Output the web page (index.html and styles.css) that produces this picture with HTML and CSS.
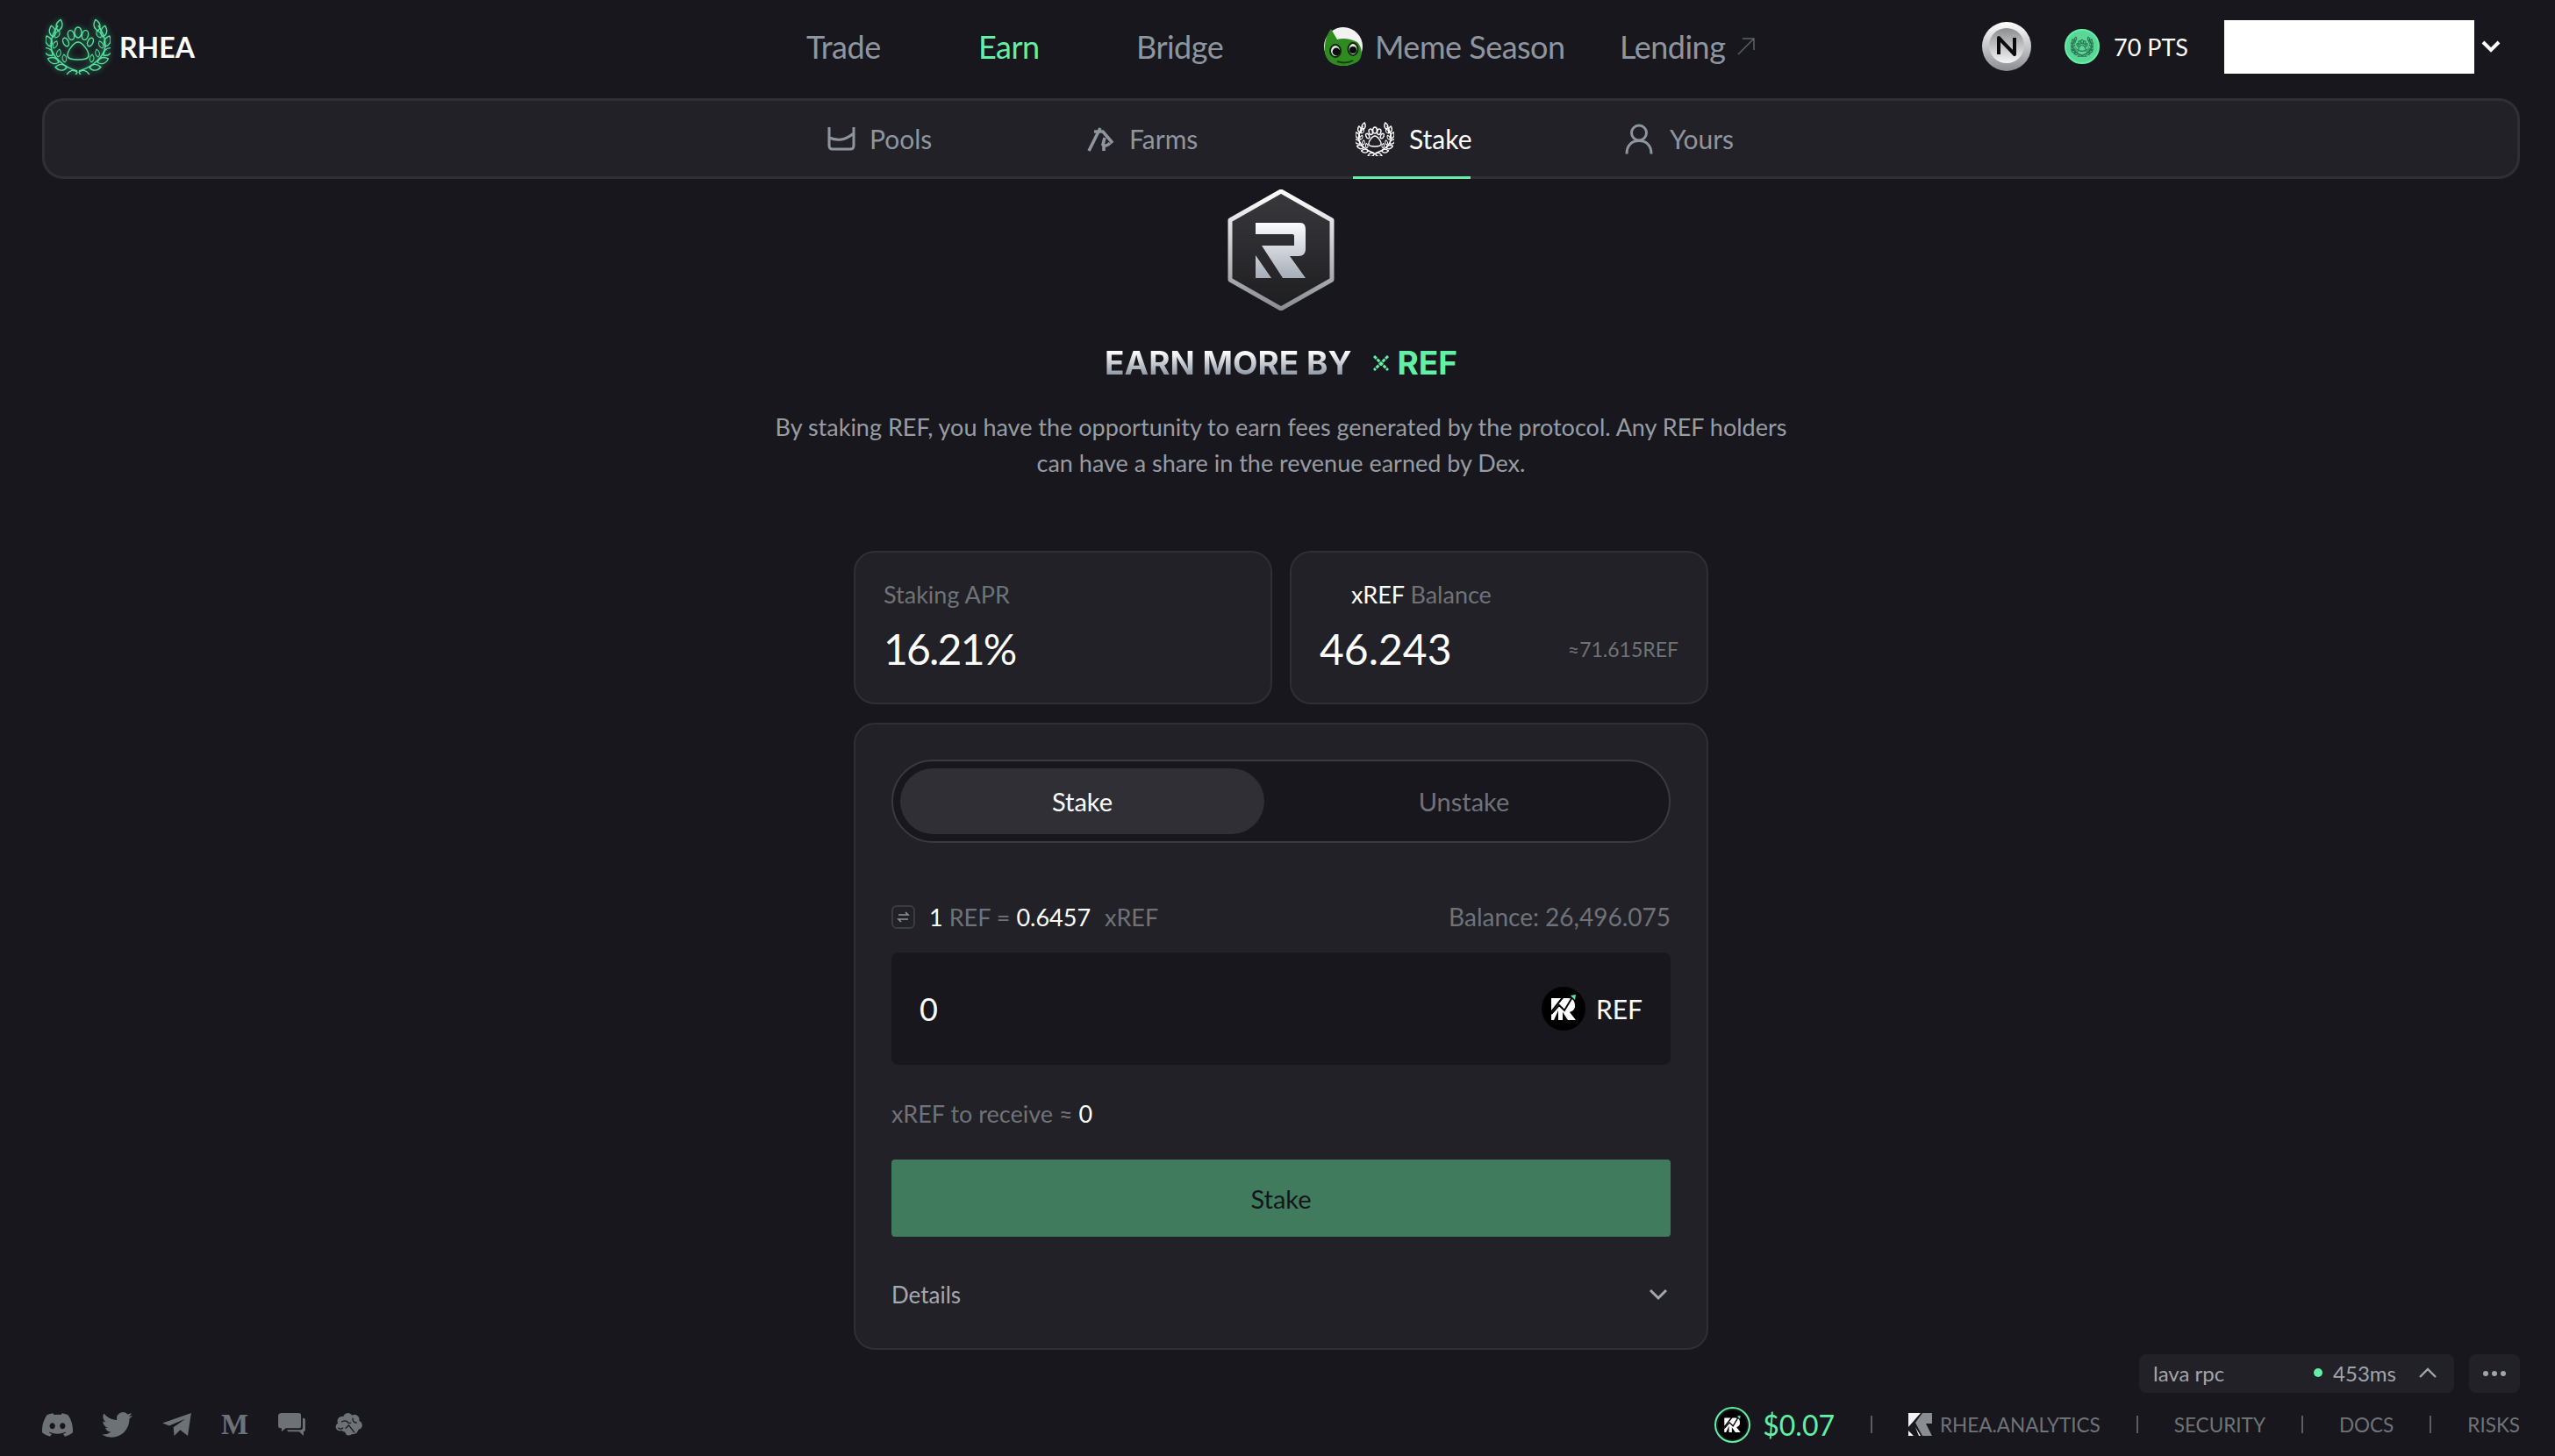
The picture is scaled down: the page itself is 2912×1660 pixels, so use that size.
FILE: index.html
```html
<!doctype html>
<html lang="en">
  <head>
    <meta charset="UTF-8" />
    <title>RHEA - Stake</title>
    <link rel="stylesheet" href="styles.css">
  </head>
  <body>
    <svg class="defs" width="0" height="0">
      <defs>
        <path id="leaf" d="M0 0C4 -3 5 -8 0 -13C-5 -8 -4 -3 0 0Z" />
        <g id="branch">
          <path d="M36 60C22 56 6 44 6 30C6 22 10 14 14 8" />
          <use href="#leaf" transform="translate(14 14) rotate(14)" />
          <use href="#leaf" transform="translate(9 21) rotate(-12)" />
          <use href="#leaf" transform="translate(11 22) rotate(32) scale(.7)" />
          <use href="#leaf" transform="translate(6 32) rotate(-22)" />
          <use href="#leaf" transform="translate(9 34) rotate(25) scale(.7)" />
          <use href="#leaf" transform="translate(8 42) rotate(-50)" />
          <use href="#leaf" transform="translate(14 44) rotate(12) scale(.7)" />
          <use href="#leaf" transform="translate(15 50) rotate(-72)" />
          <use href="#leaf" transform="translate(22 50) rotate(-8) scale(.7)" />
          <use href="#leaf" transform="translate(24 56) rotate(-88)" />
          <use href="#leaf" transform="translate(36 61) rotate(-108)" />
        </g>
        <symbol id="wreath" viewBox="0 0 74 64">
          <g fill="none" stroke="currentColor" stroke-linejoin="round">
            <use href="#branch" />
            <use href="#branch" transform="matrix(-1 0 0 1 74 0)" />
            <ellipse cx="37" cy="16" rx="4" ry="6" />
            <ellipse cx="29" cy="19" rx="3.5" ry="5.5" transform="rotate(-14 29 19)" />
            <ellipse cx="45" cy="19" rx="3.5" ry="5.5" transform="rotate(14 45 19)" />
            <ellipse cx="23" cy="27" rx="3" ry="5" transform="rotate(-25 23 27)" />
            <ellipse cx="51" cy="27" rx="3" ry="5" transform="rotate(25 51 27)" />
            <path d="M37 27C42 27 49 37 49 42C49 47 42 47 37 47C32 47 25 47 25 42C25 37 32 27 37 27Z" />
          </g>
        </symbol>
        <linearGradient id="silver" x1="0" y1="0" x2="0" y2="1">
          <stop offset="0" stop-color="#ffffff" />
          <stop offset="1" stop-color="#8b8d92" />
        </linearGradient>
        <linearGradient id="coin" x1="0" y1="0" x2="0" y2="1">
          <stop offset="0" stop-color="#8d8e90" />
          <stop offset="1" stop-color="#f5f5f6" />
        </linearGradient>
        <linearGradient id="hexfill" x1="0" y1="0" x2="0" y2="1">
          <stop offset="0" stop-color="#39393d" />
          <stop offset="1" stop-color="#1e1e21" />
        </linearGradient>
        <linearGradient id="rfill" x1="0" y1="0" x2="0" y2="1">
          <stop offset="0" stop-color="#fbfcfd" />
          <stop offset="1" stop-color="#a5adb8" />
        </linearGradient>
        <symbol id="ref-mark" viewBox="0 0 50 50">
          <circle cx="25" cy="25" r="25" fill="#000" />
          <path d="M11 13H22L11 27ZM11 30L25 13H30C37 13 38 18 38 22C38 26 35 28 32 29L39 38H30L24 29V38H19V27L14 38H11Z" fill="#fff" />
          <path d="M11 31L20 21L26 27L35 12" fill="none" stroke="#000" stroke-width="2" />
          <path d="M33 10L39 9L38 15Z" fill="#5ee0b0" />
        </symbol>
      </defs>
    </svg>

    <header class="topbar">
      <a class="brand">
        <svg class="brand-logo"><use href="#wreath" /></svg>
        <span>RHEA</span>
      </a>
      <nav class="main-nav">
        <a class="nav-trade">Trade</a>
        <a class="nav-earn">Earn</a>
        <a class="nav-bridge">Bridge</a>
        <a class="nav-meme">
          <svg class="frog" viewBox="0 0 44 44">
            <circle cx="22" cy="22" r="22" fill="#f2f2f2" />
            <path d="M1 28C0 18 3 8 8 2L15 14C22 12 30 13 38 17C44 23 44 33 40 38C30 46 12 46 5 38C3 35 1 32 1 28Z" fill="#2f8a1f" />
            <ellipse cx="13" cy="27" rx="6" ry="7" fill="#e8eee6" stroke="#0e2a09" stroke-width="2" />
            <ellipse cx="33" cy="25" rx="5.5" ry="7" fill="#e8eee6" stroke="#0e2a09" stroke-width="2" />
            <circle cx="14" cy="28" r="4.4" fill="#0c0c0c" />
            <circle cx="33" cy="26" r="4" fill="#0c0c0c" />
            <path d="M15 39C20 41 28 41 33 38" fill="none" stroke="#123d0c" stroke-width="2" />
          </svg>
          Meme Season
        </a>
        <a class="nav-lending">
          Lending
          <svg class="arrow-out" viewBox="0 0 20 20" fill="none" stroke="currentColor" stroke-width="1.5"><path d="M1 19L19 1M6 1H19V14" /></svg>
        </a>
      </nav>
      <div class="account">
        <svg class="near" viewBox="0 0 56 56">
          <ellipse cx="28" cy="28" rx="28" ry="28" fill="url(#silver)" />
          <circle cx="28" cy="27" r="20" fill="url(#coin)" />
          <path d="M19 37V18L37 37V18" fill="none" stroke="#0b0b0d" stroke-width="4" stroke-linejoin="round" />
        </svg>
        <span class="points">
          <span class="points-coin"><svg class="points-wreath"><use href="#wreath" /></svg></span>
          70 PTS
        </span>
        <div class="wallet"></div>
        <svg class="wallet-arrow" viewBox="0 0 22 14" fill="none" stroke="#fff" stroke-width="4"><path d="M2 2L11 11L20 2" /></svg>
      </div>
    </header>

    <nav class="sub-nav">
      <a class="sub-item sub-pools">
        <svg class="sub-icon" viewBox="0 0 32 28" fill="none" stroke="currentColor" stroke-width="3"><path d="M2 1V22C2 25 4 26 6 26H26C28 26 30 25 30 22V1M2 13C12 17 20 16 30 8" /></svg>
        Pools
      </a>
      <a class="sub-item sub-farms">
        <svg class="sub-icon" viewBox="0 0 32 30" fill="none" stroke="currentColor" stroke-width="3.6"><path d="M2 29L15 3M8 7H18L29 20M20 14L18 22C20 24 24 23 26 20M19 22V29" /></svg>
        Farms
      </a>
      <a class="sub-item sub-stake active">
        <svg class="stake-icon"><use href="#wreath" /></svg>
        Stake
      </a>
      <a class="sub-item sub-yours">
        <svg class="sub-icon icon-tall" viewBox="0 0 32 34" fill="none" stroke="currentColor" stroke-width="3"><circle cx="16" cy="10" r="8.5" /><path d="M2 34C2 24 8 19 16 19C24 19 30 24 30 34" /></svg>
        Yours
      </a>
    </nav>

    <main class="stake-page">
      <svg class="hex-logo" viewBox="0 0 124 138">
        <path d="M62 2L120 35V103L62 136L4 103V35Z" fill="url(#hexfill)" stroke="url(#silver)" stroke-width="5" stroke-linejoin="round" />
        <path d="M33 38H84C89 38 90 42 90 46V68C90 73 87 76 82 76H72L90 101H64L40 64H77V54C77 51 76 51 74 51H33ZM33 75L51 101H33Z" fill="url(#rfill)" />
      </svg>
      <h1 class="headline">
        <span class="headline-text">EARN MORE BY</span>
        <svg class="headline-x" viewBox="0 0 18 18" fill="none" stroke="#62f0a6" stroke-width="3" stroke-dasharray="4 1"><path d="M1 1L17 17M17 1L1 17" /></svg>
        <span class="headline-ref">REF</span>
      </h1>
      <p class="intro">By staking REF, you have the opportunity to earn fees generated by the protocol. Any REF holders<br />can have a share in the revenue earned by Dex.</p>

      <section class="stats">
        <div class="stat-card">
          <div class="stat-label">Staking APR</div>
          <div class="stat-row"><span class="stat-value stat-apr">16.21%</span></div>
        </div>
        <div class="stat-card">
          <div class="stat-label stat-label-indent"><span class="white">xREF</span> Balance</div>
          <div class="stat-row">
            <span class="stat-value">46.243</span>
            <span class="stat-note">≈71.615REF</span>
          </div>
        </div>
      </section>

      <section class="stake-card">
        <div class="tabs">
          <button class="tab tab-on">Stake</button>
          <button class="tab tab-off">Unstake</button>
        </div>
        <div class="rate-row">
          <span class="rate">
            <svg class="swap-btn" viewBox="0 0 27 27" fill="none">
              <rect x="1" y="1" width="25" height="25" rx="5" stroke="#3a3c43" stroke-width="2" />
              <path d="M8 11H19L16 8M19 16H8L11 19" stroke="#8e939b" stroke-width="1.6" />
            </svg>
            <span class="white">1</span> REF = <span class="white">0.6457</span><span class="rate-unit">xREF</span>
          </span>
          <span>Balance: 26,496.075</span>
        </div>
        <div class="amount-box">
          <span class="amount">0</span>
          <span class="token">
            <svg class="token-icon"><use href="#ref-mark" /></svg>
            REF
          </span>
        </div>
        <div class="receive">xREF to receive ≈ <span class="white">0</span></div>
        <button class="stake-btn">Stake</button>
        <div class="details">
          <span>Details</span>
          <svg class="details-arrow" viewBox="0 0 22 14" fill="none" stroke="#a4a8ae" stroke-width="3"><path d="M2 2L11 11L20 2" /></svg>
        </div>
      </section>
    </main>

    <footer class="footer">
      <div class="rpc-row">
        <div class="rpc-box">
          <span>lava rpc</span>
          <span class="rpc-status">
            <i class="rpc-dot"></i>453ms
            <svg class="rpc-arrow" viewBox="0 0 20 12" fill="none" stroke="currentColor" stroke-width="2.4"><path d="M1 11L10 2L19 11" /></svg>
          </span>
        </div>
        <div class="rpc-more"><i></i><i></i><i></i></div>
      </div>
      <div class="footer-row">
        <div class="socials">
          <svg class="social social-big" viewBox="0 0 24 24"><path d="M20.317 4.37a19.791 19.791 0 0 0-4.885-1.515.074.074 0 0 0-.079.037c-.21.375-.444.864-.608 1.25a18.27 18.27 0 0 0-5.487 0 12.64 12.64 0 0 0-.617-1.25.077.077 0 0 0-.079-.037A19.736 19.736 0 0 0 3.677 4.37a.07.07 0 0 0-.032.027C.533 9.046-.32 13.58.099 18.057a.082.082 0 0 0 .031.057 19.9 19.9 0 0 0 5.993 3.03.078.078 0 0 0 .084-.028 14.09 14.09 0 0 0 1.226-1.994.076.076 0 0 0-.041-.106 13.107 13.107 0 0 1-1.872-.892.077.077 0 0 1-.008-.128 10.2 10.2 0 0 0 .372-.292.074.074 0 0 1 .077-.01c3.928 1.793 8.18 1.793 12.062 0a.074.074 0 0 1 .078.01c.12.098.246.198.373.292a.077.077 0 0 1-.006.127 12.299 12.299 0 0 1-1.873.892.077.077 0 0 0-.041.107c.36.698.772 1.362 1.225 1.993a.076.076 0 0 0 .084.028 19.839 19.839 0 0 0 6.002-3.03.077.077 0 0 0 .032-.054c.5-5.177-.838-9.674-3.549-13.66a.061.061 0 0 0-.031-.03zM8.02 15.33c-1.183 0-2.157-1.085-2.157-2.419 0-1.333.956-2.419 2.157-2.419 1.21 0 2.176 1.096 2.157 2.42 0 1.333-.956 2.418-2.157 2.418zm7.975 0c-1.183 0-2.157-1.085-2.157-2.419 0-1.333.955-2.419 2.157-2.419 1.21 0 2.176 1.096 2.157 2.42 0 1.333-.946 2.418-2.157 2.418z" /></svg>
          <svg class="social social-big" viewBox="0 0 24 24"><path d="M23.953 4.57a10 10 0 01-2.825.775 4.958 4.958 0 002.163-2.723c-.951.555-2.005.959-3.127 1.184a4.92 4.92 0 00-8.384 4.482C7.69 8.095 4.067 6.13 1.64 3.162a4.822 4.822 0 00-.666 2.475c0 1.71.87 3.213 2.188 4.096a4.904 4.904 0 01-2.228-.616v.06a4.923 4.923 0 003.946 4.827 4.996 4.996 0 01-2.212.085 4.936 4.936 0 004.604 3.417 9.867 9.867 0 01-6.102 2.105c-.39 0-.779-.023-1.17-.067a13.995 13.995 0 007.557 2.209c9.053 0 13.998-7.496 13.998-13.985 0-.21 0-.42-.015-.63A9.935 9.935 0 0024 4.59z" /></svg>
          <svg class="social" viewBox="0 0 34 27"><path d="M0 12L34 0L30 27L21 20L14 27L13 17L27 7L8 15Z" /></svg>
          <span class="social-m">M</span>
          <svg class="social" viewBox="0 0 32 27"><path d="M4 0H24C26 0 27 1 27 3V15C27 17 26 18 24 18H9L4 22V18C1 18 0 17 0 15V3C0 1 2 0 4 0Z" /><path d="M29 6H30C31 6 32 7 32 8V20C32 21 31 22 30 22V27L25 22H12L10 20H26C28 20 29 19 29 17Z" /></svg>
          <svg class="social social-brain" viewBox="0 0 34 28">
            <circle cx="9" cy="10" r="6" /><circle cx="16" cy="6" r="6" /><circle cx="24" cy="8" r="6" /><circle cx="28" cy="15" r="5.5" /><circle cx="6" cy="17" r="5" /><circle cx="13" cy="17" r="6.5" /><circle cx="22" cy="19" r="7" /><circle cx="17" cy="23" r="4.5" />
            <path d="M8 11C12 8 16 10 17 13M22 6C21 10 24 12 27 12M13 19L17 15L21 20M24 24L21 20M4 18C6 20 8 20 10 18" fill="none" stroke="#17171d" stroke-width="1.4" />
          </svg>
        </div>
        <div class="footer-links">
          <span class="price">
            <span class="price-ring"><svg class="price-icon"><use href="#ref-mark" /></svg></span>
            $0.07
          </span>
          <i class="sep"></i>
          <a class="analytics">
            <svg class="analytics-icon" viewBox="0 0 27 26"><path d="M0 0H14L0 16ZM0 20L6 26H0Z" fill="#f2f2f2" /><path d="M8 11L16 0H27V12H20L27 26H16Z" fill="#8a8d92" /><path d="M14 26L8 16L12 26Z" fill="#f2f2f2" /></svg>
            RHEA.ANALYTICS
          </a>
          <i class="sep"></i>
          <a>SECURITY</a>
          <i class="sep"></i>
          <a>DOCS</a>
          <i class="sep"></i>
          <a>RISKS</a>
        </div>
      </div>
    </footer>
  </body>
</html>
```

FILE: styles.css
```css
:root {
  --bg: #17171d;
  --card: #212127;
  --line: #2f3036;
  --green: #62f0a6;
  --muted: #6f7378;
  --nav: #8e959f;
}

* {
  box-sizing: border-box;
  font-family: "Lato", sans-serif;
}

body {
  margin: 0;
  height: 100vh;
  overflow: hidden;
  display: flex;
  flex-direction: column;
  background-color: var(--bg);
  color: white;
}

.defs {
  position: absolute;
}

.white {
  color: white;
}

/* top bar */
.topbar {
  display: flex;
  align-items: center;
  height: 112px;
  padding: 0 60px 6px 52px;
  flex-shrink: 0;
}

.brand {
  display: flex;
  align-items: center;
  gap: 10px;
  width: 867px;
  font-size: 32px;
  font-weight: 700;
}

.brand-logo {
  width: 74px;
  height: 64px;
  color: #58e2a0;
  stroke-width: 1.4;
  filter: drop-shadow(0 0 3px #2f9f70);
}

.main-nav {
  display: flex;
  align-items: center;
  font-size: 36px;
  color: var(--nav);
  letter-spacing: -0.5px;
}

.main-nav a {
  display: flex;
  align-items: center;
}

.nav-trade {
  width: 196px;
}

.nav-earn {
  width: 180px;
  color: var(--green);
}

.nav-bridge {
  width: 214px;
}

.nav-meme {
  width: 337px;
  gap: 14px;
}

.frog {
  width: 44px;
  height: 44px;
}

.nav-lending {
  gap: 14px;
}

.arrow-out {
  width: 20px;
  height: 20px;
  color: #5e6167;
}

.account {
  display: flex;
  align-items: center;
  margin-left: auto;
}

.near {
  width: 56px;
  height: 56px;
  margin-right: 38px;
}

.points {
  display: flex;
  align-items: center;
  gap: 16px;
  font-size: 27px;
  width: 182px;
}

.points-coin {
  display: flex;
  align-items: center;
  justify-content: center;
  width: 40px;
  height: 40px;
  border-radius: 50%;
  background-color: #5bd696;
  border: 2px solid #62f0a6;
}

.points-wreath {
  width: 26px;
  height: 24px;
  color: #2a7a55;
  stroke-width: 3.5;
}

.wallet {
  width: 285px;
  height: 61px;
  background-color: white;
}

.wallet-arrow {
  width: 22px;
  height: 14px;
  margin-left: 8px;
  margin-right: 2px;
}

/* second nav */
.sub-nav {
  display: flex;
  align-items: stretch;
  height: 92px;
  margin: 0 40px 0 48px;
  padding-left: 892px;
  flex-shrink: 0;
  background-color: var(--card);
  border: 3px solid var(--line);
  border-radius: 24px;
  font-size: 30px;
  color: var(--nav);
}

.sub-item {
  display: flex;
  align-items: center;
  gap: 16px;
}

.sub-icon {
  width: 32px;
  height: 30px;
}

.icon-tall {
  height: 35px;
}

.sub-pools {
  width: 296px;
}

.sub-farms {
  width: 303px;
}

.sub-stake {
  width: 310px;
  padding-left: 3px;
  position: relative;
  gap: 17px;
}

.sub-stake.active {
  color: white;
}

.sub-stake.active::after {
  content: "";
  position: absolute;
  left: 0;
  bottom: -3px;
  width: 134px;
  height: 3px;
  background-color: var(--green);
}

.sub-yours {
  gap: 19px;
}

.stake-icon {
  width: 44px;
  height: 40px;
  stroke-width: 2.4;
}

/* stake content */
.stake-page {
  display: flex;
  flex-direction: column;
  align-items: center;
  flex: 1;
  padding: 12px 0 0 8px;
}

.hex-logo {
  width: 124px;
  height: 138px;
}

.headline {
  display: flex;
  align-items: center;
  height: 44px;
  margin: 38px 0 0;
  font-size: 37px;
  line-height: 44px;
  font-weight: 700;
}

.headline-text {
  font-family: "Inter", sans-serif;
  font-weight: 700;
  background: linear-gradient(#ffffff 20%, #8f98a5 80%);
  -webkit-background-clip: text;
  background-clip: text;
  color: transparent;
}

.headline-x {
  width: 18px;
  height: 18px;
  margin: 0 9px 0 25px;
}

.headline-ref {
  font-family: "Inter", sans-serif;
  color: var(--green);
}

.intro {
  margin: 30px 0 0;
  font-size: 27px;
  line-height: 41px;
  text-align: center;
  color: #989ca3;
}

.stats {
  display: flex;
  gap: 20px;
  width: 974px;
  margin-top: 80px;
}

.stat-card {
  flex: 1;
  height: 175px;
  padding: 30px 32px 0;
  background-color: var(--card);
  border: 2px solid var(--line);
  border-radius: 24px;
}

.stat-label {
  font-size: 27px;
  line-height: 36px;
  color: var(--muted);
}

.stat-label-indent {
  padding-left: 36px;
}

.stat-row {
  display: flex;
  align-items: center;
  justify-content: space-between;
  margin-top: 10px;
}

.stat-value {
  font-size: 48px;
  line-height: 68px;
}

.stat-apr {
  letter-spacing: -1.8px;
}

.stat-note {
  font-size: 23px;
  color: var(--muted);
}

.stake-card {
  width: 974px;
  height: 715px;
  margin-top: 21px;
  padding: 40px 41px 0;
  background-color: var(--card);
  border: 2px solid var(--line);
  border-radius: 24px;
}

.tabs {
  display: flex;
  height: 95px;
  padding: 8px;
  background-color: var(--bg);
  border: 2px solid #3a3b41;
  border-radius: 48px;
}

.tab {
  flex: 1;
  border: none;
  background: none;
  border-radius: 40px;
  font-size: 29px;
  color: var(--muted);
}

.tab-on {
  flex: 0 0 415px;
  background-color: #2f2f35;
  color: white;
}

.tab-off {
  padding-left: 8px;
}

.rate-row {
  display: flex;
  align-items: center;
  justify-content: space-between;
  height: 36px;
  margin-top: 66px;
  font-size: 28px;
  color: var(--muted);
}

.rate {
  display: flex;
  align-items: center;
  gap: 7px;
  font-size: 27px;
}

.rate-unit {
  margin-left: 9px;
}

.swap-btn {
  width: 27px;
  height: 27px;
  margin-right: 9px;
}

.amount-box {
  display: flex;
  align-items: center;
  justify-content: space-between;
  height: 128px;
  margin-top: 23px;
  padding: 0 32px;
  background-color: var(--bg);
  border-radius: 8px;
}

.amount {
  font-size: 36px;
}

.token {
  display: flex;
  align-items: center;
  gap: 12px;
  font-size: 30px;
}

.token-icon {
  width: 50px;
  height: 50px;
}

.receive {
  margin-top: 38px;
  font-size: 27px;
  line-height: 36px;
  color: var(--muted);
}

.stake-btn {
  display: block;
  width: 100%;
  height: 88px;
  margin-top: 34px;
  border: none;
  border-radius: 4px;
  background-color: #417b5e;
  font-size: 29px;
  color: #14151a;
}

.details {
  display: flex;
  align-items: center;
  justify-content: space-between;
  margin-top: 48px;
  padding-right: 3px;
  font-size: 26px;
  line-height: 36px;
  color: #a4a8ae;
}

.details-arrow {
  width: 22px;
  height: 14px;
}

/* footer */
.footer {
  flex-shrink: 0;
  height: 116px;
  padding: 0 40px 0 48px;
}

.rpc-row {
  display: flex;
  justify-content: flex-end;
  gap: 17px;
  height: 44px;
}

.rpc-box {
  display: flex;
  align-items: center;
  justify-content: space-between;
  width: 359px;
  padding: 0 20px 2px 16px;
  background-color: var(--card);
  border-radius: 8px;
  font-size: 24px;
  color: #a0a5ac;
}

.rpc-status {
  display: flex;
  align-items: center;
}

.rpc-dot {
  width: 10px;
  height: 10px;
  margin-right: 12px;
  border-radius: 50%;
  background-color: var(--green);
}

.rpc-arrow {
  width: 20px;
  height: 12px;
  margin-left: 26px;
}

.rpc-more {
  display: flex;
  align-items: center;
  justify-content: center;
  gap: 4px;
  width: 58px;
  background-color: var(--card);
  border-radius: 8px;
}

.rpc-more i {
  width: 6px;
  height: 6px;
  border-radius: 50%;
  background-color: #a0a5ac;
}

.footer-row {
  display: flex;
  align-items: center;
  justify-content: space-between;
  height: 72px;
}

.socials {
  display: flex;
  align-items: center;
  gap: 33px;
}

.social {
  width: 35px;
  height: 26px;
  fill: #6d7277;
}

.social-big {
  height: 35px;
}

.social-brain {
  margin-left: -3px;
}

.social-m {
  width: 30px;
  font-family: "Liberation Serif", serif;
  font-size: 33px;
  font-weight: 700;
  line-height: 26px;
  text-align: center;
  color: #6d7277;
}

.footer-links {
  display: flex;
  align-items: center;
  gap: 41px;
  font-size: 22.5px;
  color: var(--muted);
}

.price {
  display: flex;
  align-items: center;
  gap: 14px;
  font-size: 32px;
  color: var(--green);
}

.price-ring {
  display: flex;
  align-items: center;
  justify-content: center;
  width: 41px;
  height: 41px;
  border: 2px solid var(--green);
  border-radius: 50%;
}

.price-icon {
  width: 33px;
  height: 33px;
}

.sep {
  width: 2px;
  height: 20px;
  background-color: #5a5d63;
}

.analytics {
  display: flex;
  align-items: center;
  gap: 9px;
}

.analytics-icon {
  width: 27px;
  height: 26px;
}
```
